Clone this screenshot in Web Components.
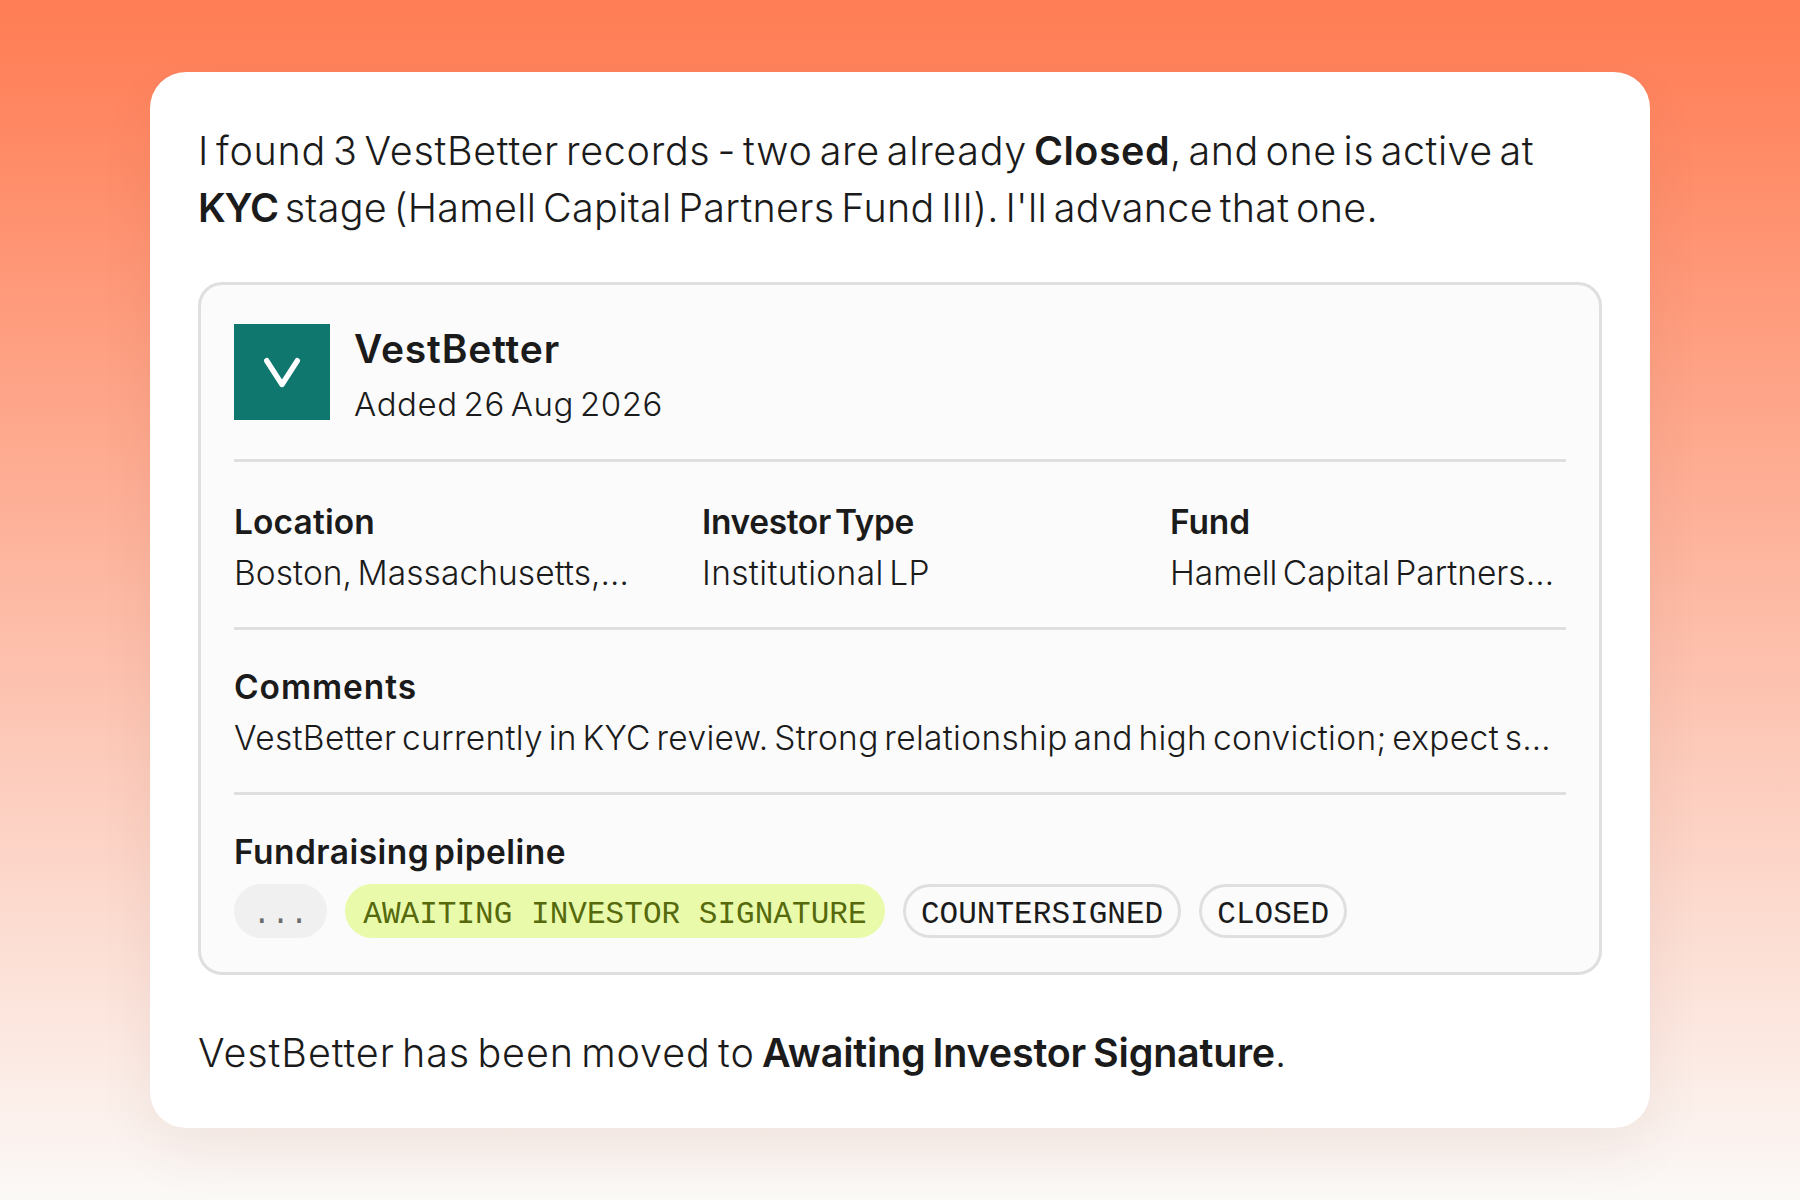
<!DOCTYPE html>
<html lang="en">
<head>
<meta charset="UTF-8">
<title>VestBetter</title>
<style>
    body {
        margin: 0;
        font-family: 'Inter', 'Liberation Sans', sans-serif;
        color: #1b1b1b;
    }
</style>
</head>
<body>
<chat-stage>
    <chat-line>
        <fit-text width="836">I found 3 VestBetter records - two are already </fit-text><fit-text width="136" strong>Closed</fit-text><fit-text width="364">, and one is active at</fit-text>
    </chat-line>
    <chat-line>
        <fit-text width="80" strong>KYC</fit-text><fit-text width="1100"> stage (Hamell Capital Partners Fund III). I'll advance that one.</fit-text>
    </chat-line>

    <record-card>
        <record-header slot="header" name="VestBetter" name-width="206" added="Added 26 Aug 2026" added-width="309"></record-header>
        <record-row>
            <record-field label="Location" label-width="141" value="Boston, Massachusetts,…" value-width="395"></record-field>
            <record-field label="Investor Type" label-width="212" value="Institutional LP" value-width="228"></record-field>
            <record-field label="Fund" label-width="80" value="Hamell Capital Partners…" value-width="384"></record-field>
        </record-row>
        <record-row>
            <record-field label="Comments" label-width="183" value="VestBetter currently in KYC review. Strong relationship and high conviction; expect s…" value-width="1317"></record-field>
        </record-row>
        <record-row>
            <record-field label="Fundraising pipeline" label-width="332">
                <stage-tag kind="more">...</stage-tag>
                <stage-tag kind="current">AWAITING INVESTOR SIGNATURE</stage-tag>
                <stage-tag>COUNTERSIGNED</stage-tag>
                <stage-tag>CLOSED</stage-tag>
            </record-field>
        </record-row>
    </record-card>

    <chat-line>
        <fit-text width="564">VestBetter has been moved to </fit-text><fit-text width="513" strong>Awaiting Investor Signature</fit-text><fit-text width="10">.</fit-text>
    </chat-line>
</chat-stage>

<script>
// Text run that spaces its letters to fill a given width
class FitText extends HTMLElement {
    constructor() {
        super();
        // No whitespace around the slot: the host keeps it as is
        this.attachShadow({ mode: 'open' }).innerHTML = `<style>
            :host {
                display: inline-block;
                white-space: pre;
                word-spacing: -0.12em;
            }

            :host([strong]) {
                font-weight: 600;
                word-spacing: -0.07em;
            }
        </style><slot></slot>`;
    }

    connectedCallback() {
        const target = Number(this.getAttribute('width'));
        const natural = this.getBoundingClientRect().width;
        if (target && natural) {
            this.style.letterSpacing = (target - natural) / this.textContent.length + 'px';
        }
    }
}

class ChatStage extends HTMLElement {
    constructor() {
        super();
        this.attachShadow({ mode: 'open' }).innerHTML = `
        <style>
            :host {
                display: flex;
                box-sizing: border-box;
                height: 1200px;
                padding: 72px 150px;
                background: linear-gradient(#ff7d54 0%, #ff855f 8%, #fbf9f7 100%);
            }

            .bubble {
                flex: 1;
                box-sizing: border-box;
                padding: 51px 48px 0;
                border-radius: 36px;
                background: #fff;
                box-shadow: 0 24px 60px rgba(60, 30, 20, 0.06);
            }
        </style>
        <div class="bubble"><slot></slot></div>
        `;
    }
}

class ChatLine extends HTMLElement {
    constructor() {
        super();
        this.attachShadow({ mode: 'open' }).innerHTML = `
        <style>
            :host {
                display: flex;
                height: 57px;
                line-height: 57px;
                font-size: 39.5px;
                font-weight: 360;
                white-space: nowrap;
            }
        </style>
        <slot></slot>
        `;
    }
}

class RecordCard extends HTMLElement {
    constructor() {
        super();
        this.attachShadow({ mode: 'open' }).innerHTML = `
        <style>
            :host {
                display: block;
                box-sizing: border-box;
                height: 693px;
                margin: 45px 0 50px;
                padding: 39px 33px 0;
                border: 3px solid #dfdfdf;
                border-radius: 24px;
                background: #fbfbfb;
            }
        </style>
        <slot name="header"></slot>
        <slot></slot>
        `;
    }
}

class RecordHeader extends HTMLElement {
    constructor() {
        super();
        this.attachShadow({ mode: 'open' }).innerHTML = `
        <style>
            :host {
                display: flex;
                gap: 24px;
                height: 135px;
            }

            svg {
                width: 96px;
                height: 96px;
                background: #10776e;
            }

            .name {
                height: 49px;
                line-height: 49px;
                font-size: 39px;
                font-weight: 600;
            }

            .added {
                height: 62px;
                line-height: 62px;
                font-size: 33px;
                font-weight: 360;
            }
        </style>
        <svg viewBox="0 0 96 96" fill="none" stroke="#fff" stroke-width="5.4" stroke-linecap="round" stroke-linejoin="round">
            <path d="M32.7 36.7L48 60.5L63.3 36.7"/>
        </svg>
        <div>
            <div class="name"><fit-text width="${this.getAttribute('name-width')}">${this.getAttribute('name')}</fit-text></div>
            <div class="added"><fit-text width="${this.getAttribute('added-width')}">${this.getAttribute('added')}</fit-text></div>
        </div>
        `;
    }
}

class RecordRow extends HTMLElement {
    constructor() {
        super();
        this.attachShadow({ mode: 'open' }).innerHTML = `
        <style>
            :host {
                display: grid;
                grid-auto-flow: column;
                grid-auto-columns: 1fr;
                column-gap: 72px;
                box-sizing: border-box;
                height: 165px;
                padding-top: 32px;
                border-top: 3px solid #dfdfdf;
            }

            :host(:first-of-type) {
                height: 168px;
                padding-top: 35px;
            }
        </style>
        <slot></slot>
        `;
    }
}

class RecordField extends HTMLElement {
    constructor() {
        super();
        const value = this.getAttribute('value');
        this.attachShadow({ mode: 'open' }).innerHTML = `
        <style>
            :host {
                display: block;
                font-size: 33.5px;
                line-height: 51px;
                white-space: nowrap;
            }

            .label {
                height: 51px;
                font-weight: 600;
            }

            .value {
                height: 51px;
                font-weight: 360;
            }

            .tags {
                display: flex;
                gap: 18px;
                margin-top: 6px;
            }
        </style>
        <div class="label"><fit-text width="${this.getAttribute('label-width')}">${this.getAttribute('label')}</fit-text></div>
        ${value ? `<div class="value"><fit-text width="${this.getAttribute('value-width')}">${value}</fit-text></div>` : '<div class="tags"><slot></slot></div>'}
        `;
    }
}

class StageTag extends HTMLElement {
    constructor() {
        super();
        this.attachShadow({ mode: 'open' }).innerHTML = `
        <style>
            :host {
                box-sizing: border-box;
                height: 54px;
                padding: 0 15px;
                border: 3px solid #dfdfdf;
                border-radius: 27px;
                font: 31px/55px 'Liberation Mono', monospace;
                letter-spacing: 0.04px;
            }

            :host([kind="more"]) {
                padding: 0 15.5px;
                border-color: #f0f0f0;
                background: #f0f0f0;
                color: #6c6c6c;
            }

            :host([kind="current"]) {
                padding: 0 15.3px;
                border-color: #e9fbab;
                background: #e9fbab;
                color: #56690c;
            }
        </style>
        <slot></slot>
        `;
    }
}

customElements.define('chat-stage', ChatStage);
customElements.define('chat-line', ChatLine);
customElements.define('record-card', RecordCard);
customElements.define('record-row', RecordRow);
customElements.define('stage-tag', StageTag);
customElements.define('record-header', RecordHeader);
customElements.define('record-field', RecordField);
customElements.define('fit-text', FitText);
</script>
</body>
</html>
